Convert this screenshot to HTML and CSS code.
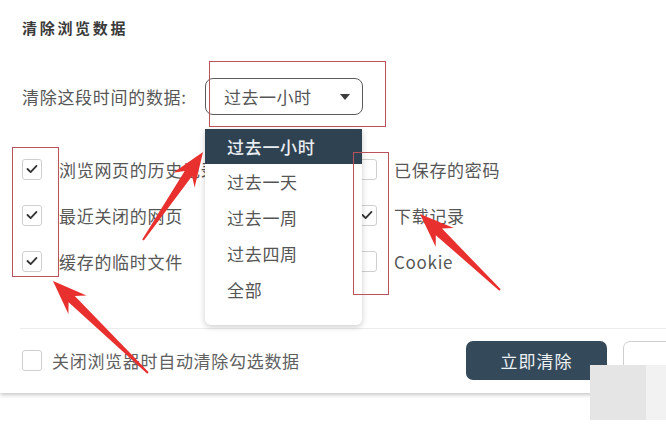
FILE: index.html
```html
<!DOCTYPE html>
<html lang="zh-CN">
<head>
<meta charset="utf-8">
<title>清除浏览数据</title>
<link rel="stylesheet" href="styles.css">
</head>
<body>
<div class="panel">
  <h1 class="title">清除浏览数据</h1>
  <div class="range-row">
    <span class="range-label">清除这段时间的数据:</span>
    <div class="select"><span>过去一小时</span><span class="caret"></span></div>
  </div>
  <div class="options">
    <div class="opt"><span class="cb"><svg viewBox="0 0 20 20"><polyline points="5,10 8.5,13.5 15,6.5"/></svg></span><span>浏览网页的历史记录</span></div>
    <div class="opt"><span class="cb"></span><span>已保存的密码</span></div>
    <div class="opt"><span class="cb"><svg viewBox="0 0 20 20"><polyline points="5,10 8.5,13.5 15,6.5"/></svg></span><span>最近关闭的网页</span></div>
    <div class="opt"><span class="cb"><svg viewBox="0 0 20 20"><polyline points="5,10 8.5,13.5 15,6.5"/></svg></span><span>下载记录</span></div>
    <div class="opt"><span class="cb"><svg viewBox="0 0 20 20"><polyline points="5,10 8.5,13.5 15,6.5"/></svg></span><span>缓存的临时文件</span></div>
    <div class="opt"><span class="cb"></span><span>Cookie</span></div>
  </div>
  <div class="footer">
    <div class="opt auto"><span class="cb"></span><span>关闭浏览器时自动清除勾选数据</span></div>
    <div class="actions">
      <button class="btn primary">立即清除</button>
      <button class="btn outline" aria-label="取消"></button>
    </div>
  </div>
</div>

<ul class="menu">
  <li class="active">过去一小时</li>
  <li>过去一天</li>
  <li>过去一周</li>
  <li>过去四周</li>
  <li>全部</li>
</ul>

<div class="mark mark-select"></div>
<div class="mark mark-left"></div>
<div class="mark mark-right"></div>

<svg class="arrows" viewBox="0 0 666 427" width="666" height="427">
  <polygon points="143.8,240.6 192.1,176.0 194.6,187.4 203,152 173.2,172.8 184.7,171.0 142.2,239.4"/>
  <polygon points="148.7,372.3 74.8,295.9 86.5,295.4 53,281 68.4,314.0 68.6,302.3 147.3,373.7"/>
  <polygon points="500.7,289.3 442.0,228.6 453.7,228.0 420,214 435.7,246.8 435.8,235.2 499.3,290.7"/>
</svg>

<div class="blot"></div>
<div class="blot-light"></div>
</body>
</html>
```

FILE: styles.css
```css
html, body {
  margin: 0;
  padding: 0;
  background: #ffffff;
  overflow: hidden;
  width: 666px;
  height: 427px;
}

body {
  position: relative;
  font-family: "Noto Sans CJK SC", "Noto Sans", sans-serif;
  color: #575757;
}

.panel {
  box-sizing: border-box;
  width: 743px;
  height: 393px;
  padding: 18px 20px 0 22px;
  background: #fff;
  box-shadow: 0 2px 4px rgba(0, 0, 0, 0.22);
}

.title {
  margin: 0;
  font-size: 15px;
  line-height: 20px;
  font-weight: 600;
  letter-spacing: 2.7px;
  color: #3a3a3a;
}

.range-row {
  display: flex;
  align-items: center;
  margin-top: 40px;
  height: 37px;
}

.range-label {
  font-size: 17px;
  letter-spacing: 0.7px;
  width: 183px;
  white-space: nowrap;
}

.select {
  box-sizing: border-box;
  display: flex;
  align-items: center;
  width: 158px;
  height: 37px;
  padding: 0 12px 0 18px;
  border: 1.5px solid #5c5c5c;
  border-radius: 8px;
  font-size: 17px;
  letter-spacing: 0.5px;
  color: #555;
}

.caret {
  margin-left: auto;
  width: 0;
  height: 0;
  border-left: 5px solid transparent;
  border-right: 5px solid transparent;
  border-top: 6px solid #3d3d3d;
}

.options {
  display: grid;
  grid-template-columns: 335px auto;
  grid-auto-rows: 46px;
  margin-top: 31px;
}

.opt {
  display: flex;
  align-items: center;
  gap: 17px;
  font-size: 17px;
  letter-spacing: 0.7px;
  white-space: nowrap;
}

.cb {
  box-sizing: border-box;
  flex: none;
  width: 20px;
  height: 21px;
  border: 1px solid #cfcfcf;
  border-radius: 3px;
  background: #fff;
  display: flex;
  align-items: center;
  justify-content: center;
}

.cb svg {
  width: 18px;
  height: 18px;
  fill: none;
  stroke: #333;
  stroke-width: 2;
  stroke-linecap: round;
  stroke-linejoin: round;
}

.footer {
  display: flex;
  align-items: center;
  margin-top: 44px;
  margin-left: -2px;
  padding: 12px 0 13px 2px;
  border-top: 1px solid #ececec;
}

.footer .opt {
  gap: 10px;
  color: #606060;
}

.actions {
  margin-left: auto;
  display: flex;
  gap: 16px;
}

.btn {
  box-sizing: border-box;
  height: 39px;
  border-radius: 7px;
  font-family: inherit;
  font-size: 17px;
  letter-spacing: 1px;
}

.primary {
  width: 141px;
  background: #34495a;
  border: none;
  color: #eef2f5;
}

.outline {
  width: 100px;
  background: #fff;
  border: 1px solid #cfcfcf;
}

.menu {
  position: absolute;
  left: 205px;
  top: 129px;
  width: 157px;
  height: 196px;
  margin: 0;
  padding: 0;
  list-style: none;
  background: #fff;
  border-radius: 0 0 6px 6px;
  box-shadow: 0 2px 6px rgba(0, 0, 0, 0.2);
}

.menu li {
  height: 36px;
  line-height: 36px;
  padding-left: 22px;
  font-size: 17px;
  letter-spacing: 0.7px;
  color: #555;
}

.menu li.active {
  height: 35px;
  line-height: 35px;
  background: #2f4252;
  color: #e9eef2;
  font-weight: 500;
}

.mark {
  position: absolute;
  box-sizing: border-box;
  border: 1.2px solid #b9525b;
}

.mark-select {
  left: 209px;
  top: 61px;
  width: 177px;
  height: 66px;
}

.mark-left {
  left: 12px;
  top: 147px;
  width: 47px;
  height: 130px;
}

.mark-right {
  left: 353px;
  top: 152px;
  width: 36px;
  height: 143px;
}

.arrows {
  position: absolute;
  left: 0;
  top: 0;
  fill: #e8302e;
}

.blot {
  position: absolute;
  left: 590px;
  top: 365px;
  width: 56px;
  height: 55px;
  background: #e5e5e5;
}

.blot-light {
  position: absolute;
  left: 646px;
  top: 365px;
  width: 20px;
  height: 55px;
  background: #f2f2f2;
}
```
